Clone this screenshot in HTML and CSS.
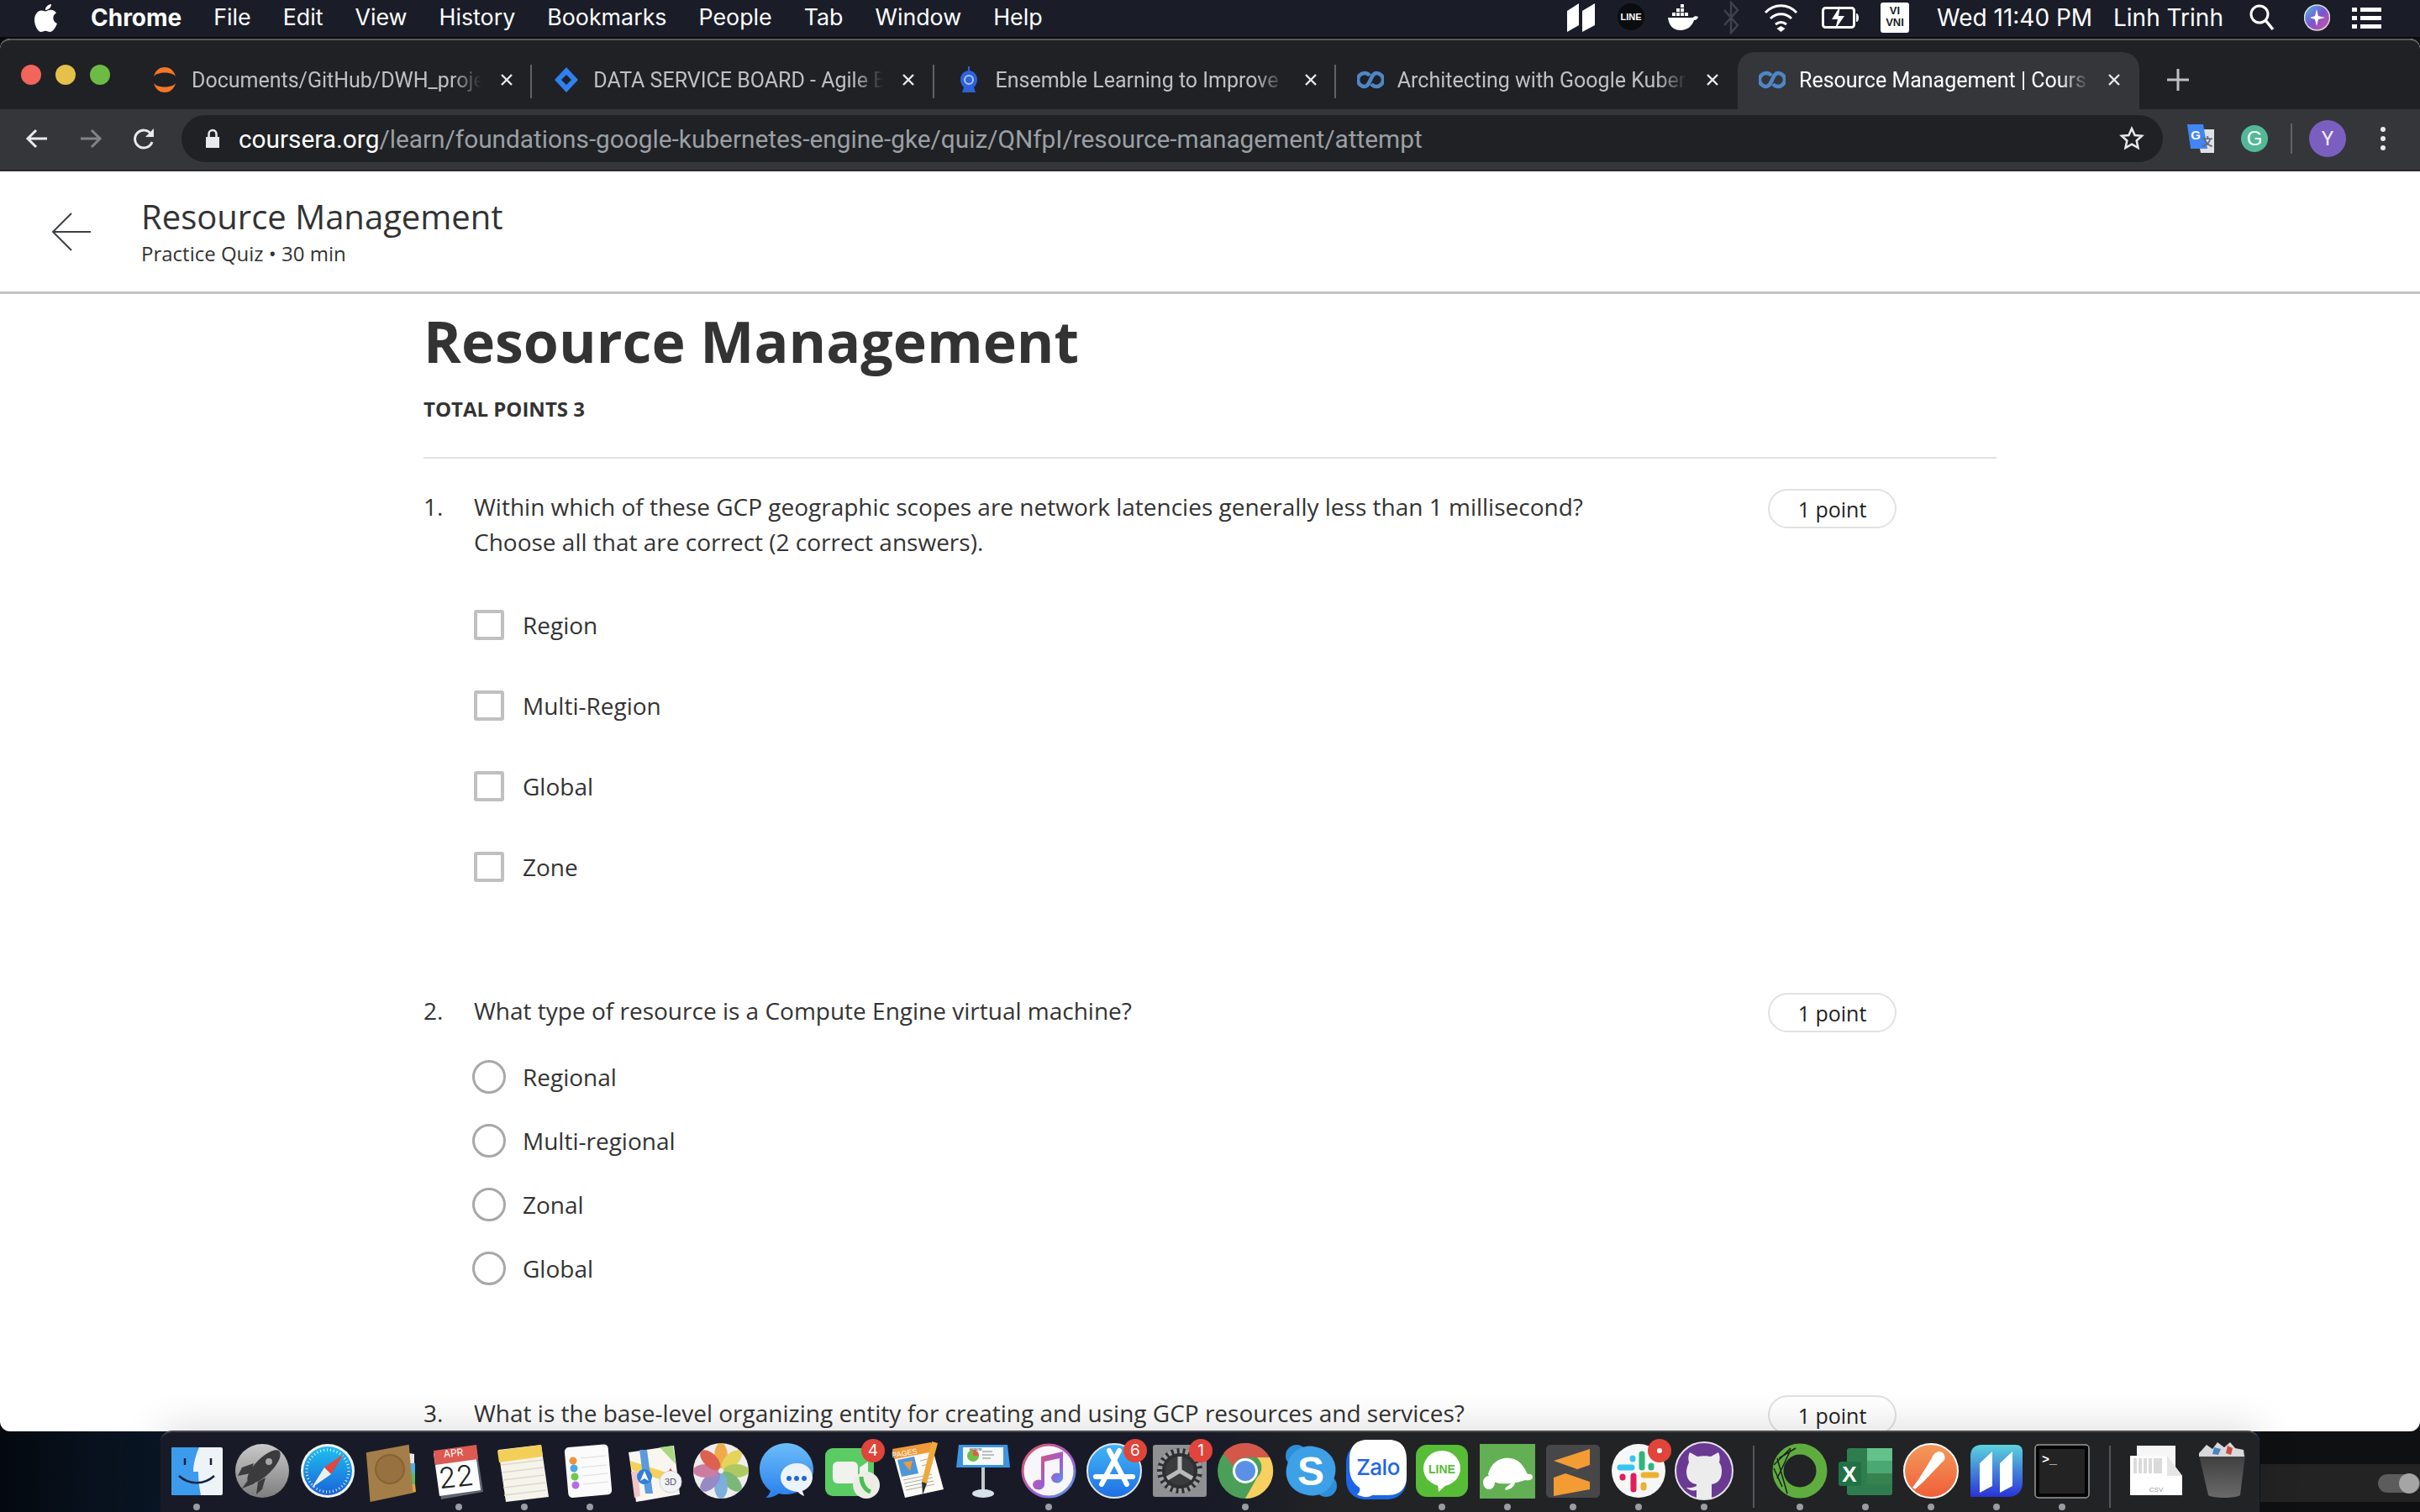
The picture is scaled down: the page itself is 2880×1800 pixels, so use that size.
FILE: index.html
```html
<!DOCTYPE html>
<html>
  <head>
    <meta charset="utf-8">
    <title>Resource Management | Coursera</title>
    <link rel="stylesheet" href="styles.css">
  </head>
  <body>
    <div class="desktop">
      <div class="menubar">
        <svg class="apple" viewBox="0 0 30 34"><path fill="#fff" d="M21 1c.3 3-2.600 7-7 7-.400-3.500 3-6.500 7-7zM14 9.500c1.500 0 3.500-1.700 6.500-1.700 2.500 0 5 1.200 6.500 3.500-5.500 3.300-4.500 10.500 1 12.700-1.500 4-5 10-8.500 10-2 0-3-1.300-5.300-1.300-2.400 0-3.400 1.300-5.300 1.300C5 34 1 26 1 20 1 13 5 8.500 9.500 8.500c2 0 3.300 1 4.500 1z"/></svg>
        <nav class="menu">
          <b>Chrome</b><span>File</span><span>Edit</span><span>View</span><span>History</span><span>Bookmarks</span><span>People</span><span>Tab</span><span>Window</span><span>Help</span>
        </nav>
        <div class="status">
          <svg width="37" height="36" viewBox="0 0 37 36"><path fill="#fff" d="M3 10 17 1v26L3 35zM21 10 36 1v26L21 35z"/></svg>
          <svg width="32" height="40" viewBox="0 0 32 40"><circle cx="16" cy="19" r="16" fill="#0b0c10"/><text x="16" y="23" text-anchor="middle" class="line-tray">LINE</text></svg>
          <svg width="40" height="36" viewBox="0 0 40 36"><path fill="#fff" d="M2 18h30c1-2 4-2 6-1-1 3-3 4-5 4-2 7-8 12-16 12-9 0-14-6-15-15z"/><path fill="#fff" d="M7 12h4v4H7zM12 12h4v4h-4zM17 12h4v4h-4zM22 12h4v4h-4zM17 7h4v4h-4zM17 2h4v4h-4zM12 7h4v4h-4z"/></svg>
          <svg width="22" height="40" viewBox="0 0 22 40"><path fill="none" stroke="#3f424c" stroke-width="2.500" d="M3 11l16 18-8 9V2l8 9L3 29"/></svg>
          <svg width="45" height="36" viewBox="0 0 45 36"><g fill="none" stroke="#fff" stroke-width="3"><path d="M4 12c10-11 27-11 37 0M10 19c7-7 18-7 25 0M16 26c4-3 9-3 13 0"/></g><path fill="#fff" d="M22.500 28l5 3-5 4-5-4z"/></svg>
          <svg width="44" height="30" viewBox="0 0 44 30"><rect x="1.500" y="3.500" width="37" height="23" rx="3" fill="none" stroke="#fff" stroke-width="3"/><path fill="#fff" d="M22 1l-10 16h7l-3 12 11-16h-7zM41 10c2 0 3 2 3 5s-1 5-3 5z"/></svg>
          <div class="vni">VI<br>VNI</div>
          <span class="clock">Wed 11:40 PM</span>
          <span class="user">Linh Trinh</span>
          <svg class="tray-search" width="30" height="32" viewBox="0 0 30 32"><circle cx="12" cy="12" r="10" fill="none" stroke="#fff" stroke-width="3"/><path stroke="#fff" stroke-width="3.500" d="M19 19l9 11"/></svg>
          <svg class="tray-siri" width="31" height="32" viewBox="0 0 31 32"><defs><linearGradient id="siri" x1="0" y1="0" x2="1" y2="1"><stop offset="0" stop-color="#45c1e8"/><stop offset=".5" stop-color="#7a55d0"/><stop offset="1" stop-color="#e0509a"/></linearGradient></defs><circle cx="15.500" cy="16" r="15" fill="url(#siri)" stroke="#ddd" stroke-width="1.500"/><path fill="#fff" d="M15 6l2 8 8 2-8 2-2 8-2-8-6-2 6-2z"/></svg>
          <svg width="35" height="30" viewBox="0 0 35 30"><path fill="#fff" d="M0 3h6v5H0zM10 3h25v5H10zM0 13h6v5H0zM10 13h25v5H10zM0 23h6v5H0zM10 23h25v5H10z"/></svg>
        </div>
      </div>

      <div class="window">
        <div class="tabstrip">
          <div class="traffic"><i class="red"></i><i class="yellow"></i><i class="green"></i></div>
          <div class="tab">
            <svg class="favicon" viewBox="0 0 32 32"><path fill="#f37726" d="M3 12C5 4 11 1 16 1s11 3 13 11C25 6 7 6 3 12zM3 20c2 8 8 11 13 11s11-3 13-11c-4 6-22 6-26 0z"/></svg>
            <span class="tab-title">Documents/GitHub/DWH_proje</span>
            <svg class="tab-close" viewBox="0 0 16 16"><path fill="none" stroke="#e8eaed" stroke-width="2.400" d="M2 2l12 12M14 2 2 14"/></svg>
          </div>
          <div class="tab">
            <svg class="favicon" viewBox="0 0 32 32"><path fill="#2f80f0" d="M16 1l14 15-14 15L2 16zM16 10l-6 6 6 6 6-6z"/></svg>
            <span class="tab-title">DATA SERVICE BOARD - Agile B</span>
            <svg class="tab-close" viewBox="0 0 16 16"><path fill="none" stroke="#e8eaed" stroke-width="2.400" d="M2 2l12 12M14 2 2 14"/></svg>
          </div>
          <div class="tab">
            <svg class="favicon" viewBox="0 0 32 32"><path fill="#2e62d9" d="M15 0h2v5h-2zM16 5c6 0 10 5 10 11 0 4-2 7-4 9l2 6H8l2-6c-2-2-4-5-4-9 0-6 4-11 10-11z"/><circle cx="16" cy="16" r="5" fill="none" stroke="#aac4f5" stroke-width="2"/></svg>
            <span class="tab-title">Ensemble Learning to Improve</span>
            <svg class="tab-close" viewBox="0 0 16 16"><path fill="none" stroke="#e8eaed" stroke-width="2.400" d="M2 2l12 12M14 2 2 14"/></svg>
          </div>
          <div class="tab">
            <svg class="favicon" viewBox="0 0 32 32"><use href="#coursera"/></svg>
            <span class="tab-title">Architecting with Google Kuber</span>
            <svg class="tab-close" viewBox="0 0 16 16"><path fill="none" stroke="#e8eaed" stroke-width="2.400" d="M2 2l12 12M14 2 2 14"/></svg>
          </div>
          <div class="tab tab-active">
            <svg class="favicon" viewBox="0 0 32 32"><path id="coursera" fill="none" stroke="#4f86c6" stroke-width="4.500" d="M15 11c-1.500-2-3-3-6-3a8 8 0 0 0 0 16c7 0 7-16 14-16a8 8 0 0 1 0 16c-3 0-4.500-1-6-3"/></svg>
            <span class="tab-title">Resource Management | Cours</span>
            <svg class="tab-close" viewBox="0 0 16 16"><path fill="none" stroke="#e8eaed" stroke-width="2.400" d="M2 2l12 12M14 2 2 14"/></svg>
          </div>
          <svg class="new-tab" viewBox="0 0 26 26"><path fill="#bdc1c6" d="M11.500 0h3v11.500H26v3H14.500V26h-3V14.500H0v-3h11.500z"/></svg>
        </div>

        <div class="toolbar">
          <svg class="nav-icon" viewBox="0 0 28 28"><path fill="none" stroke="#e8eaed" stroke-width="3" d="M26 14H4M13 4 3 14l10 10"/></svg>
          <svg class="nav-icon" viewBox="0 0 28 28"><path fill="none" stroke="#808488" stroke-width="3" d="M2 14h22M15 4l10 10-10 10"/></svg>
          <svg class="nav-icon" viewBox="0 0 28 28"><path fill="none" stroke="#e8eaed" stroke-width="3" d="M23 18a10.500 10.500 0 1 1-1-9"/><path fill="#e8eaed" d="M25 2v10H15z"/></svg>
          <div class="omnibox">
            <svg class="lock" viewBox="0 0 18 24"><path fill="#e8eaed" d="M1 10h16v13H1z"/><path fill="none" stroke="#e8eaed" stroke-width="2.500" d="M4.500 10V6.500a4.500 4.500 0 0 1 9 0V10"/></svg>
            <span class="url"><b>coursera.org</b>/learn/foundations-google-kubernetes-engine-gke/quiz/QNfpI/resource-management/attempt</span>
            <svg class="star" viewBox="0 0 30 30"><path fill="none" stroke="#e8eaed" stroke-width="2.500" d="M15 3l3.600 8 8.400.8-6.300 5.700 1.800 8.500-7.500-4.400L7.500 26l1.800-8.500L3 11.800l8.400-.8z"/></svg>
          </div>
          <div class="extensions">
            <svg width="32" height="34" viewBox="0 0 32 34"><path fill="#dfe1e5" d="M11 6h21v28H16z"/><path fill="#4285f4" d="M0 0h19l5 29H4z"/><text x="10" y="18" text-anchor="middle" class="gt">G</text><text x="24" y="25" text-anchor="middle" class="gt gt-dark">文</text></svg>
            <svg width="32" height="32" viewBox="0 0 32 32"><circle cx="16" cy="16" r="16" fill="#53b897"/><text x="16" y="24" text-anchor="middle" class="gram">G</text></svg>
            <i class="ext-sep"></i>
            <div class="avatar">Y</div>
            <svg width="8" height="30" viewBox="0 0 8 30"><g fill="#e8eaed"><circle cx="4" cy="4" r="3"/><circle cx="4" cy="15" r="3"/><circle cx="4" cy="26" r="3"/></g></svg>
          </div>
        </div>

        <div class="page">
          <header class="quiz-head">
            <svg class="back" viewBox="0 0 48 46"><path fill="none" stroke="#3c4043" stroke-width="2" d="M47 23H2M24 1 2 23l22 22"/></svg>
            <div>
              <div class="head-title">Resource Management</div>
              <div class="head-sub">Practice Quiz • 30 min</div>
            </div>
          </header>
          <main class="quiz">
            <h1>Resource Management</h1>
            <div class="total">TOTAL POINTS 3</div>

            <section class="question">
              <span class="q-num">1.</span>
              <div class="q-body">
                <p>Within which of these GCP geographic scopes are network latencies generally less than 1 millisecond?<br>Choose all that are correct (2 correct answers).</p>
                <div class="options checks">
                  <label><input type="checkbox">Region</label>
                  <label><input type="checkbox">Multi-Region</label>
                  <label><input type="checkbox">Global</label>
                  <label><input type="checkbox">Zone</label>
                </div>
              </div>
              <span class="pill">1 point</span>
            </section>

            <section class="question q2">
              <span class="q-num">2.</span>
              <div class="q-body">
                <p>What type of resource is a Compute Engine virtual machine?</p>
                <div class="options radios">
                  <label><input type="radio" name="q2">Regional</label>
                  <label><input type="radio" name="q2">Multi-regional</label>
                  <label><input type="radio" name="q2">Zonal</label>
                  <label><input type="radio" name="q2">Global</label>
                </div>
              </div>
              <span class="pill">1 point</span>
            </section>

            <section class="question q3">
              <span class="q-num">3.</span>
              <div class="q-body">
                <p>What is the base-level organizing entity for creating and using GCP resources and services?</p>
              </div>
              <span class="pill">1 point</span>
            </section>
          </main>
        </div>
      </div>

      <div class="wall-slider"><i></i></div>

      <div class="dock">
        <div class="app on"><svg viewBox="0 0 78 78"><rect x="9" y="11" width="61" height="57" rx="2" fill="#eef3f8"/><path fill="#3d9bee" d="M11 11h31c-4 9-7 20-7 29h6c0 9 1 19 3 28H11a2 2 0 0 1-2-2V13a2 2 0 0 1 2-2z"/><path d="M25 24v8M56 24v8" stroke="#15233b" stroke-width="2.500"/><path d="M18 45c12 11 30 11 42 0" fill="none" stroke="#15233b" stroke-width="2.500"/></svg></div>
        <div class="app"><svg viewBox="0 0 78 78"><defs><linearGradient id="lp" x1="0" y1="0" x2="0" y2="1"><stop offset="0" stop-color="#c9c9c9"/><stop offset="1" stop-color="#7d7d7d"/></linearGradient></defs><circle cx="39" cy="39" r="32" fill="url(#lp)"/><g fill="#3b3b3d"><ellipse cx="41" cy="34" rx="10" ry="26" transform="rotate(45 41 34)"/><path d="M29 30 15 35l-5 10 15-3zM43 47l-4 14-7 6 2-15zM25 46 15 60l15-6z"/></g><circle cx="47" cy="28" r="4" fill="#a5a5a5"/></svg></div>
        <div class="app"><svg viewBox="0 0 78 78"><defs><linearGradient id="saf" x1="0" y1="0" x2="0" y2="1"><stop offset="0" stop-color="#1fc0f0"/><stop offset="1" stop-color="#1a63d8"/></linearGradient></defs><circle cx="39" cy="39" r="32" fill="#f3f3f3"/><circle cx="39" cy="39" r="29" fill="url(#saf)"/><circle cx="39" cy="39" r="25" fill="none" stroke="#e8f3fb" stroke-width="3" stroke-dasharray="1 3"/><path fill="#e5453a" d="M58 19 43 43l-8-8z"/><path fill="#eee" d="M20 59l15-24 8 8z"/></svg></div>
        <div class="app"><svg viewBox="0 0 78 78"><path fill="#e8e8e8" d="M58 18l6 1v12h-6z"/><path fill="#4fb0dc" d="M58 30h7v12h-7z"/><path fill="#63b75a" d="M58 42h7v13h-7z"/><path fill="#e2a53c" d="M58 55h7l1 9-8 2z"/><path fill="#a47e48" d="M6 16l53-10 5 60-53 11z" transform="translate(1 2) scale(.96)"/><circle cx="35" cy="37" r="17" fill="#97713f" stroke="#866335" stroke-width="2"/></svg></div>
        <div class="app on"><svg viewBox="0 0 78 78"><path fill="#5f6670" d="M10 20l50-8 8 52-50 9z"/><path fill="#fdfdfd" d="M9 18l49-7 7 51-49 7z"/><path fill="#dc5a52" d="M8 11l51-7 2 17-51 7z" transform="translate(1 4)"/><text x="33" y="22" text-anchor="middle" class="cal-mon" transform="rotate(-6 33 22)">APR</text><text x="37" y="58" text-anchor="middle" class="cal-day" transform="rotate(-6 37 58)">22</text></svg></div>
        <div class="app on"><svg viewBox="0 0 78 78"><path fill="#f6f3ea" d="M8 14l51-6 9 62-51 6z"/><path fill="#f3cf57" d="M7 8l52-7 2 14-52 7z" transform="translate(0 7)"/><path stroke="#dcd8cc" stroke-width="1.500" d="M11 32l50-6M12 41l50-6M13 50l50-6M14 59l50-6M15 68l50-6"/></svg></div>
        <div class="app on"><svg viewBox="0 0 78 78"><rect x="11" y="9" width="52" height="60" rx="5" fill="#fbfbfb" transform="rotate(-5 39 39)"/><circle cx="19" cy="27" r="4.500" fill="#f0923a"/><circle cx="20" cy="36" r="4.500" fill="#4aa9ea"/><circle cx="21" cy="46" r="4.500" fill="#6ec84a"/><circle cx="22" cy="56" r="4.500" fill="#b46ee0"/><path stroke="#ddd" d="M28 24l30-3M29 35l30-3M30 45l30-3M31 55l30-3"/></svg></div>
        <div class="app"><svg viewBox="0 0 78 78"><path fill="#f8f6ef" d="M7 17l54-8 7 58-52 9z"/><path fill="#f2c4c8" d="M10 40l8-1 3 30-7 2z"/><path fill="#f4d15a" d="M9 27l52 17-2 10-48-16z"/><path fill="#a9da80" d="M44 11l16-2 3 22z"/><path fill="#5b9bdc" d="M20 14h9l7 52h-9z"/><circle cx="26" cy="46" r="9" fill="#2f7fdc"/><path fill="#fff" d="M26 39l5 12-5-3-5 3z"/><circle cx="57" cy="52" r="13" fill="#f2f3f4" stroke="#cfd1d3"/><text x="57" y="56" text-anchor="middle" class="maps3d">3D</text><path fill="#e5453a" d="M57 36l2 3h-4z"/></svg></div>
        <div class="app"><svg viewBox="0 0 78 78"><circle cx="39" cy="39" r="33" fill="#efeded"/><g opacity=".9"><ellipse cx="39" cy="21" rx="8" ry="15" fill="#efa43a"/><ellipse cx="39" cy="21" rx="8" ry="15" fill="#e4d24b" transform="rotate(45 39 39)"/><ellipse cx="39" cy="21" rx="8" ry="15" fill="#a8c651" transform="rotate(90 39 39)"/><ellipse cx="39" cy="21" rx="8" ry="15" fill="#6fb36c" transform="rotate(135 39 39)"/><ellipse cx="39" cy="21" rx="8" ry="15" fill="#71a9da" transform="rotate(180 39 39)"/><ellipse cx="39" cy="21" rx="8" ry="15" fill="#8d80bf" transform="rotate(225 39 39)"/><ellipse cx="39" cy="21" rx="8" ry="15" fill="#c9709a" transform="rotate(270 39 39)"/><ellipse cx="39" cy="21" rx="8" ry="15" fill="#dc5240" transform="rotate(315 39 39)"/></g></svg></div>
        <div class="app"><svg viewBox="0 0 78 78"><defs><linearGradient id="msg" x1="0" y1="0" x2="0" y2="1"><stop offset="0" stop-color="#6cbdf8"/><stop offset="1" stop-color="#2a7fec"/></linearGradient></defs><path fill="url(#msg)" d="M39 6C21 6 7 20 7 37c0 11 5 20 13 26-1 3-3 6-6 8 6 0 12-2 16-5 3 1 6 1 9 1 18 0 32-14 32-30S57 6 39 6z"/><path fill="#edf3fa" d="M52 30c-12 0-20 7-20 17 0 9 8 16 20 17 3 2 5 4 8 5l-2-6c7-3 12-9 12-16 0-10-8-17-18-17z"/><g fill="#1f6ad2"><circle cx="42" cy="48" r="3"/><circle cx="51" cy="48" r="3"/><circle cx="60" cy="48" r="3"/></g></svg></div>
        <div class="app"><svg viewBox="0 0 78 78"><rect x="7" y="12" width="58" height="57" rx="9" fill="#5bcc64"/><rect x="16" y="28" width="30" height="26" rx="6" fill="#f1f1ee"/><path fill="#f1f1ee" d="M48 35l10-7v28l-10-7z"/><circle cx="56" cy="56" r="16" fill="#eceee6"/><path fill="none" stroke="#4cbd55" stroke-width="5" d="M50 46c0 9 5 16 11 18"/></svg><span class="badge">4</span></div>
        <div class="app"><svg viewBox="0 0 78 78"><path fill="#fbfaf5" d="M9 15l46-9 15 55-46 10z"/><path fill="#f0993a" d="M9 13l46-8 3 11-46 9z"/><text x="24" y="21" class="pages-label" text-anchor="middle" transform="rotate(-10 24 21)">PAGES</text><path fill="#4d96d8" d="M15 26l20-4 5 20-20 4z"/><path fill="#ef9a3a" d="M22 29l11-2-3 12z"/><path stroke="#aaa" stroke-width="1" d="M22 50l34-7M23 54l34-7M24 58l34-7M25 62l34-7M42 27l13-3M44 33l13-3"/><path fill="#eea93a" d="M56 4l7 2-13 48-6-2z"/><path fill="#333" d="M44 52l6 2-5 14z"/></svg></div>
        <div class="app"><svg viewBox="0 0 78 78"><rect x="37" y="34" width="4" height="30" fill="#c3c8cd"/><ellipse cx="39" cy="66" rx="13" ry="5" fill="#d8e2ea"/><path fill="#3c95e2" d="M10 8h58l3 27H7z"/><rect x="15" y="11" width="48" height="21" fill="#f6f8fa"/><circle cx="27" cy="21" r="7" fill="#6ec04a"/><path fill="#e8594a" d="M27 21v-7a7 7 0 0 1 7 7z"/><path stroke="#aaa" stroke-width="1.500" d="M38 16h12M38 20h14M38 24h10"/><text x="30" y="15" class="keynote-label" text-anchor="middle">KEYNOTE</text></svg></div>
        <div class="app on"><svg viewBox="0 0 78 78"><defs><linearGradient id="it" x1="0" y1="0" x2="1" y2="1"><stop offset="0" stop-color="#e8555f"/><stop offset=".6" stop-color="#9c5cd6"/><stop offset="1" stop-color="#48a6e8"/></linearGradient></defs><circle cx="39" cy="39" r="31" fill="#f7f7f9" stroke="url(#it)" stroke-width="3"/><path fill="url(#it)" d="M30 22l26-6v32a7 6 0 1 1-4-6V24l-18 4v28a7 6 0 1 1-4-6z"/></svg></div>
        <div class="app"><svg viewBox="0 0 78 78"><defs><linearGradient id="as" x1="0" y1="0" x2="0" y2="1"><stop offset="0" stop-color="#43b5f6"/><stop offset="1" stop-color="#1e6fe4"/></linearGradient></defs><circle cx="39" cy="39" r="32" fill="url(#as)" stroke="#e6e6e6" stroke-width="2"/><path stroke="#fff" stroke-width="6" stroke-linecap="round" d="M45 15 24 55M33 15l21 40M17 46h44"/></svg><span class="badge">6</span></div>
        <div class="app"><svg viewBox="0 0 78 78"><rect x="7" y="8" width="64" height="62" rx="3" fill="#8e9092"/><circle cx="39" cy="39" r="27" fill="#2e2f31"/><circle cx="39" cy="39" r="24" fill="none" stroke="#9c9d9f" stroke-width="6" stroke-dasharray="4 3"/><circle cx="39" cy="39" r="17" fill="#3a3b3d"/><path stroke="#bbb" stroke-width="5" d="M39 39V22M39 39 24 48M39 39l15 9"/></svg><span class="badge">1</span></div>
        <div class="app on"><svg viewBox="0 0 78 78"><circle cx="39" cy="39" r="33" fill="#4c9f59"/><path fill="#d5574b" d="M39 6a33 33 0 0 1 29 17H39a16 16 0 0 0-15 10L13 18A33 33 0 0 1 39 6z"/><path fill="#f8d060" d="M68 23a33 33 0 0 1-29 49l14-25a16 16 0 0 0 0-24z"/><circle cx="39" cy="39" r="15" fill="#fff"/><circle cx="39" cy="39" r="12" fill="#5a90e6"/></svg></div>
        <div class="app"><svg viewBox="0 0 78 78"><circle cx="22" cy="21" r="13" fill="#2d8fd8"/><circle cx="57" cy="57" r="13" fill="#2d8fd8"/><rect x="10" y="10" width="58" height="58" rx="27" fill="#3ea0e6" transform="rotate(15 39 39)"/><text x="39" y="56" text-anchor="middle" class="skype">S</text></svg></div>
        <div class="app"><svg viewBox="0 0 78 78"><path fill="#1e66e8" d="M26 6h26c14 0 23 9 23 24v19c0 15-10 24-24 24H27C12 73 3 64 3 49V30C3 15 12 6 26 6z"/><path fill="#fff" d="M28 2h26c14 0 21 9 21 23v21c0 14-8 22-22 22H34c-4 3-11 3-18-1 3-2 4-5 3-8C11 54 7 46 7 35V25C7 11 14 2 28 2z"/><text x="41" y="44" text-anchor="middle" class="zalo">Zalo</text></svg></div>
        <div class="app on"><svg viewBox="0 0 78 78"><rect x="8" y="8" width="62" height="62" rx="13" fill="#57bd36"/><ellipse cx="39" cy="36" rx="22" ry="21" fill="#fff"/><path fill="#fff" d="M34 54h12l-11 10z"/><text x="39" y="42" text-anchor="middle" class="line-app">LINE</text></svg></div>
        <div class="app on"><svg viewBox="0 0 78 78"><rect x="6" y="7" width="66" height="65" fill="#62b053"/><path fill="#fff" d="M16 43c3-13 14-21 26-19 12 1 17 11 21 19 2-1 6 0 6 3 0 4-5 5-9 4-9 3-17 5-30 4-6-1-12-4-14-11z"/><ellipse cx="17" cy="53" rx="7" ry="8" fill="#fff"/><path fill="#fff" d="M36 60c4-4 8-7 12-8 0 5-5 9-11 10z"/></svg></div>
        <div class="app on"><svg viewBox="0 0 78 78"><rect x="7" y="8" width="64" height="63" rx="5" fill="#47474a"/><path fill="#f39c34" d="M16 27 59 13v19l-29 10 29 10v9L16 69V47l28-10-28-10z" /></svg></div>
        <div class="app on"><svg viewBox="0 0 78 78"><circle cx="39" cy="39" r="32" fill="#f7f7f7"/><g stroke-width="7" stroke-linecap="round"><path stroke="#36c5f0" d="M17 35h14"/><path stroke="#36c5f0" d="M32 24v1"/><path stroke="#2eb67d" d="M43 19v16"/><path stroke="#2eb67d" d="M54 33v2"/><path stroke="#ecb22e" d="M45 44h15"/><path stroke="#ecb22e" d="M45 56v3"/><path stroke="#e01e5a" d="M33 45v16"/><path stroke="#e01e5a" d="M20 46v1"/></g></svg><span class="badge badge-dot"><i></i></span></div>
        <div class="app on"><svg viewBox="0 0 78 78"><circle cx="39" cy="39" r="34" fill="#6a3a93" stroke="#e6e2ea" stroke-width="2"/><path fill="#ececec" d="M22 17l9 5c5-1 11-1 16 0l9-5c2 4 2 8 1 12 3 4 3 8 3 11 0 10-6 14-12 15v17H30V62c-5 1-9 0-12-3 2 0 7 1 12-2v-2c-6-1-12-5-12-15 0-3 1-7 3-11-1-4-1-8 1-12z"/></svg></div>
        <div class="dock-sep"></div>
        <div class="app on"><svg viewBox="0 0 78 78"><circle cx="39" cy="39" r="26" fill="none" stroke="#5fad3f" stroke-width="13"/><path fill="none" stroke="#1d1e20" stroke-width="1.500" d="M8 32l20-20M12 48l16-34M18 58 8 36M24 66 12 24M14 24l20-12"/></svg></div>
        <div class="app on"><svg viewBox="0 0 78 78"><rect x="17" y="12" width="54" height="56" rx="3" fill="#2f7d4f"/><path fill="#62c28a" d="M41 12h30v15H41z"/><path fill="#4aa873" d="M41 27h30v15H41z"/><path fill="#38824f" d="M41 42h30v13H41z"/><rect x="7" y="28" width="27" height="29" rx="3" fill="#207245"/><text x="20" y="52" text-anchor="middle" class="excel">X</text></svg></div>
        <div class="app on"><svg viewBox="0 0 78 78"><defs><linearGradient id="pm" x1="0" y1="0" x2="0" y2="1"><stop offset="0" stop-color="#f49a5c"/><stop offset="1" stop-color="#ef5e38"/></linearGradient></defs><circle cx="39" cy="39" r="32" fill="url(#pm)" stroke="#fff" stroke-width="2"/><path fill="#fff" d="M49 16a7 7 0 0 1 3 13L30 52l-10 9-3-2 8-11 15-24c1-4 5-8 9-8z"/></svg></div>
        <div class="app on"><svg viewBox="0 0 78 78"><defs><linearGradient id="mn" x1="0" y1="0" x2="0" y2="1"><stop offset="0" stop-color="#5cd4dc"/><stop offset="1" stop-color="#2a33d8"/></linearGradient></defs><path fill="url(#mn)" d="M21 8h41c5 0 8 3 8 8v38c0 9-7 16-16 16H8V21C8 13 13 8 21 8z"/><path fill="#fff" d="M19 35l15-14v41l-15 8zM43 35l15-14v41l-15 8z" transform="translate(0 -5)"/></svg></div>
        <div class="app on"><svg viewBox="0 0 78 78"><rect x="7" y="8" width="64" height="63" rx="4" fill="#050505" stroke="#9a9a9a" stroke-width="1.500"/><rect x="12" y="13" width="54" height="53" fill="#232323"/><text x="15" y="30" class="term">&gt;_</text></svg></div>
        <div class="dock-sep dock-sep-b"></div>
        <div class="app"><svg viewBox="0 0 78 78"><path fill="#f6f6f6" d="M16 9h46v41H16z"/><path fill="#fff" d="M8 21h44l18 24v23H8z"/><path fill="#dadada" d="M12 24h34v18H12z"/><path stroke="#fff" stroke-width="2" d="M17 24v18M23 24v18M29 24v18M35 24v18"/><path fill="#e5e5e5" d="M52 21v24h18z"/><text x="39" y="64" text-anchor="middle" class="csv">CSV</text></svg></div>
        <div class="app"><svg viewBox="0 0 78 78"><defs><linearGradient id="tr" x1="0" y1="0" x2="0" y2="1"><stop offset="0" stop-color="#3e3e3e"/><stop offset="1" stop-color="#6a6a6a"/></linearGradient></defs><path fill="url(#tr)" d="M12 20h55l-6 48c-5 4-33 4-38 0z"/><path fill="#d9d9d9" d="M12 18l9-10 7 5 6-8 8 6 7-6 6 7 10 2 1 8-54 0z"/><path fill="#4a85c8" d="M30 11l8 2-3 7-7-1z"/><path fill="#c94c3f" d="M46 9l6 3-2 8-6-2z"/></svg></div>
      </div>
    </div>
  </body>
</html>
```

FILE: styles.css
```css
* {
  box-sizing: border-box;
}
body {
  margin: 0;
  overflow: hidden;
  background: #05101c;
}
p,
h1 {
  margin: 0;
}
i {
  display: block;
}
.desktop {
  position: relative;
  width: 2880px;
  height: 1800px;
  overflow: hidden;
  background: linear-gradient(90deg, #04090f 0, #0a1626 191px, #0a1626 2690px, #0f1012 2690px);
}

/* mac menu bar */
.menubar {
  display: flex;
  align-items: center;
  height: 46px;
  padding: 0 46px 2px 40px;
  background: #1a1d28;
  border-bottom: 2px solid #0a0a0c;
  color: #fff;
  font-family: Inter, sans-serif;
  font-size: 26.8px;
  white-space: nowrap;
}
.apple {
  width: 30px;
  height: 34px;
  margin-right: 38px;
}
.menu {
  display: flex;
  gap: 38px;
}
.menu b {
  font-size: 28px;
  font-weight: 700;
}
.status {
  display: flex;
  align-items: center;
  gap: 26px;
  margin-left: auto;
  font-size: 28px;
}
.line-tray {
  font: 700 11px "Liberation Sans", sans-serif;
  fill: #fff;
}
.vni {
  width: 34px;
  height: 36px;
  padding-top: 3px;
  border-radius: 3px;
  background: #fff;
  color: #1a1d28;
  font: 700 13px/14px "Liberation Sans", sans-serif;
  text-align: center;
}
.clock {
  width: 181px;
  margin-left: 7px;
}
.user {
  width: 129px;
  margin-left: 3px;
}
.tray-search {
  margin-left: 7px;
}
.tray-siri {
  margin-left: 9px;
}

/* chrome window */
.window {
  width: 2880px;
  height: 1658px;
  overflow: hidden;
  border-radius: 12px;
  background: #fff;
  font-family: Roboto, sans-serif;
}
.tabstrip {
  display: flex;
  align-items: flex-end;
  height: 84px;
  border-top: 2px solid #57585b;
  border-radius: 12px 12px 0 0;
  background: #202124;
}
.traffic {
  display: flex;
  align-self: center;
  gap: 17px;
  width: 155px;
  padding-left: 25px;
}
.traffic i {
  width: 24px;
  height: 24px;
  border-radius: 50%;
}
.red {
  background: #f1655b;
}
.yellow {
  background: #e5c04a;
}
.green {
  background: #6cbb45;
}
.tab {
  position: relative;
  display: flex;
  align-items: center;
  flex: none;
  width: 478.25px;
  height: 68px;
  padding: 0 0 2px 25px;
  color: #bdc1c6;
  font-size: 25px;
}
.tab::after {
  content: "";
  position: absolute;
  top: 15px;
  right: 0;
  width: 2px;
  height: 40px;
  background: #5f6368;
}
.tab:nth-child(5)::after,
.tab-active::after {
  display: none;
}
.tab-active {
  border-radius: 20px 20px 0 0;
  background: #35363a;
  color: #fff;
}
.favicon {
  flex: none;
  width: 32px;
  height: 32px;
  margin-right: 16px;
}
.tab-title {
  flex: none;
  width: 352px;
  overflow: hidden;
  white-space: nowrap;
  -webkit-mask-image: linear-gradient(90deg, #000 310px, transparent 345px);
  mask-image: linear-gradient(90deg, #000 310px, transparent 345px);
}
.tab-close {
  flex: none;
  width: 16px;
  height: 16px;
  margin-left: 15px;
}
.new-tab {
  width: 26px;
  height: 26px;
  margin: 0 0 22px 33px;
}

.toolbar {
  display: flex;
  align-items: center;
  height: 74px;
  padding: 0 0 2px 30px;
  background: #35363a;
  border-bottom: 2px solid #28292c;
}
.nav-icon {
  width: 28px;
  height: 28px;
  margin-right: 36px;
}
.omnibox {
  display: flex;
  align-items: center;
  width: 2358px;
  height: 56px;
  margin-left: -6px;
  padding: 0 22px 0 28px;
  border-radius: 28px;
  background: #202124;
}
.lock {
  width: 18px;
  height: 24px;
  margin-right: 22px;
}
.url {
  color: #9aa0a6;
  font-size: 29.8px;
  white-space: nowrap;
}
.url b {
  color: #fff;
  font-weight: 400;
}
.star {
  width: 30px;
  height: 30px;
  margin-left: auto;
}
.extensions {
  display: flex;
  align-items: center;
  gap: 32px;
  margin-left: 29px;
}
.gt {
  fill: #fff;
  font: 700 15px "Liberation Sans", sans-serif;
}
.gt-dark {
  fill: #667;
  font-size: 13px;
  font-family: "Noto Sans CJK SC", sans-serif;
}
.gram {
  fill: #fff;
  font: 400 24px "Liberation Sans", sans-serif;
}
.ext-sep {
  width: 2px;
  height: 36px;
  margin: 0 -1px 0 -5px;
  background: #5f6368;
}
.avatar {
  width: 44px;
  height: 44px;
  margin-left: -11px;
  margin-right: 8px;
  border-radius: 50%;
  background: #7b5fc0;
  color: #eee;
  font-size: 24px;
  line-height: 44px;
  text-align: center;
}

/* coursera page */
.page {
  color: #333;
  font-family: "Open Sans", sans-serif;
}
.quiz-head {
  display: flex;
  height: 146px;
  padding: 26px 0 0 61px;
  border-bottom: 3px solid #c4c4c4;
}
.back {
  width: 48px;
  height: 46px;
  margin: 23px 59px 0 0;
}
.head-title {
  font-size: 40px;
  line-height: 56px;
}
.head-sub {
  font-size: 24px;
  line-height: 32px;
}
.quiz {
  padding: 0 504px 0 504px;
}
.quiz h1 {
  padding-top: 14px;
  font-size: 68px;
  line-height: 84px;
}
.total {
  margin-top: 23px;
  padding-bottom: 41px;
  border-bottom: 2px solid #e1e1e1;
  font-size: 24px;
  font-weight: 700;
  line-height: 32px;
}
.question {
  display: flex;
  margin-top: 36px;
  font-size: 28px;
  line-height: 42px;
}
.q2 {
  margin-top: 102px;
}
.q3 {
  margin-top: 113px;
}
.q-num {
  flex: none;
  width: 60px;
}
.q-body {
  flex: 1;
}
.pill {
  flex: none;
  align-self: flex-start;
  width: 153px;
  height: 47px;
  margin-right: 119px;
  border: 2px solid #e1e1e1;
  border-radius: 24px;
  color: #1f1f1f;
  font-size: 25px;
  line-height: 44px;
  text-align: center;
}
.options {
  display: flex;
  flex-direction: column;
}
.options label {
  display: flex;
  align-items: center;
}
.options input {
  flex: none;
  margin: 0;
  appearance: none;
  background: #fff;
}
.checks {
  margin-top: 30px;
}
.checks label {
  gap: 22px;
  height: 96px;
  line-height: 40px;
}
.checks input {
  width: 36px;
  height: 36px;
  border: 4px solid #c0c0c0;
  border-radius: 3px;
}
.radios {
  margin-top: 20px;
}
.radios label {
  gap: 20px;
  height: 76px;
  line-height: 40px;
}
.radios input {
  width: 40px;
  height: 40px;
  margin-left: -2px;
  border: 3px solid #a8a8a8;
  border-radius: 50%;
}

/* desktop bits around the window */
.wall-slider {
  position: absolute;
  top: 1743px;
  right: 0;
  width: 190px;
  height: 45px;
  background: #232323;
}
.wall-slider i {
  position: absolute;
  top: 12px;
  right: 0;
  width: 50px;
  height: 22px;
  border-radius: 11px;
  background: #5c5c5c;
}
.wall-slider i::after {
  content: "";
  position: absolute;
  top: -1px;
  left: 25px;
  width: 24px;
  height: 24px;
  border-radius: 50%;
  background: #a5a5a5;
}

/* dock */
.dock {
  position: absolute;
  top: 1703px;
  left: 191px;
  display: flex;
  width: 2498px;
  height: 97px;
  padding: 7px 0 0 4px;
  border-top: 2px solid #4a4b4f;
  border-radius: 14px 14px 0 0;
  background: linear-gradient(90deg, #181b27 0, #181b27 50%, #222325 56%, #222325 100%);
  box-shadow: 0 0 50px rgba(0, 0, 0, 0.16);
}
.app {
  position: relative;
  flex: none;
  width: 78px;
  height: 78px;
}
.app svg {
  display: block;
  width: 78px;
  height: 78px;
}
.app.on::after {
  content: "";
  position: absolute;
  left: 35px;
  bottom: -8px;
  width: 8px;
  height: 8px;
  border-radius: 50%;
  background: #9a9ca3;
}
.badge {
  position: absolute;
  top: 1px;
  left: 50px;
  width: 28px;
  height: 28px;
  border-radius: 50%;
  background: #e0443a;
  color: #fff;
  font: 400 19px/28px Inter, sans-serif;
  text-align: center;
}
.badge-dot {
  display: flex;
  align-items: center;
  justify-content: center;
}
.badge-dot i {
  width: 6px;
  height: 6px;
  border-radius: 50%;
  background: #fff;
}
.dock-sep {
  flex: none;
  width: 36px;
  padding-left: 19px;
  background: linear-gradient(#55565a, #55565a) 19px 9px / 2px 74px no-repeat;
}
.dock-sep-b {
  width: 34px;
  background-position: 17px 9px;
}
.cal-mon {
  fill: #fff;
  font: 400 12px Inter, sans-serif;
}
.cal-day {
  fill: #222;
  font: 300 34px Inter, sans-serif;
}
.maps3d {
  fill: #556;
  font: 400 11px "Liberation Sans", sans-serif;
}
.pages-label {
  fill: #fff;
  font: 400 9px "Liberation Sans", sans-serif;
}
.keynote-label {
  fill: #555;
  font: 700 3px "Liberation Sans", sans-serif;
}
.skype {
  fill: #fff;
  font: 700 48px "Liberation Sans", sans-serif;
}
.zalo {
  fill: #1e66e8;
  font: 500 26px Inter, sans-serif;
  letter-spacing: -0.5px;
}
.line-app {
  fill: #57bd36;
  font: 700 14px "Liberation Sans", sans-serif;
}
.excel {
  fill: #fff;
  font: 700 26px "Liberation Sans", sans-serif;
}
.term {
  fill: #fff;
  font: 700 15px "Liberation Mono", monospace;
}
.csv {
  fill: #999;
  font: 400 8px "Liberation Sans", sans-serif;
}
```
